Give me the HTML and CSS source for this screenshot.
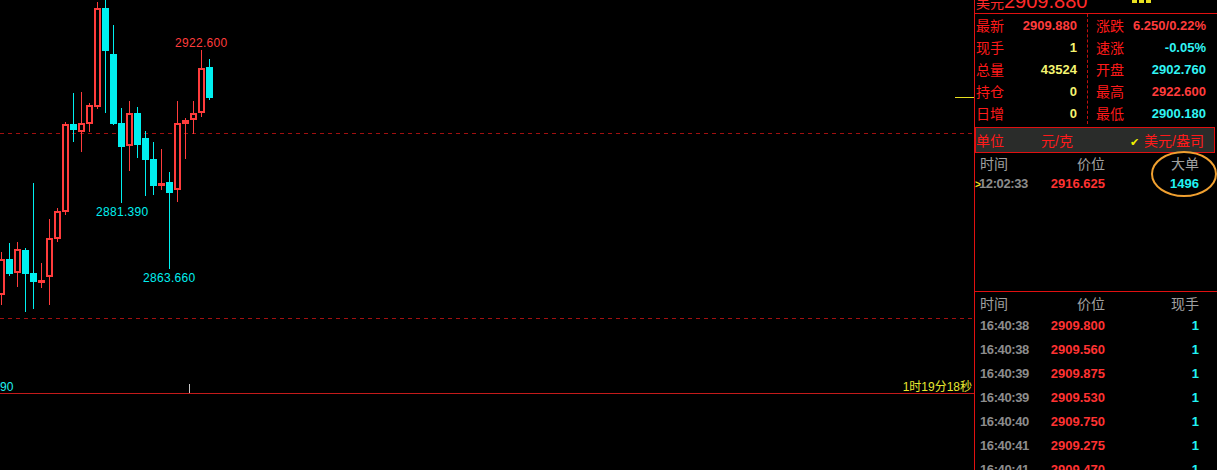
FILE: index.html
```html
<!DOCTYPE html>
<html lang="zh-CN">
<head>
<meta charset="utf-8">
<title>行情</title>
<link rel="stylesheet" href="styles.css">
</head>
<body>
<div class="screen">
  <div class="chart">
    <svg class="plot" width="974" height="377" viewBox="0 0 974 377">
      <line class="dash" x1="0" y1="133.5" x2="974" y2="133.5"/>
      <line class="dash" x1="0" y1="318.5" x2="974" y2="318.5"/>
      <line class="mark" x1="955" y1="97.5" x2="974" y2="97.5"/>

      <line class="wr" x1="1.5" y1="252" x2="1.5" y2="305"/><rect class="br" x="-1" y="260" width="5" height="34"/>
      <line class="wc" x1="9.5" y1="243" x2="9.5" y2="276"/><rect class="bc" x="6" y="259" width="7" height="15"/>
      <line class="wr" x1="17.5" y1="242" x2="17.5" y2="287"/><rect class="br" x="15" y="250" width="5" height="22"/>
      <line class="wc" x1="25.5" y1="248" x2="25.5" y2="312"/><rect class="bc" x="22" y="250" width="7" height="24"/>
      <line class="wc" x1="33.5" y1="183" x2="33.5" y2="309"/><rect class="bc" x="30" y="273" width="7" height="9"/>
      <line class="wr" x1="41.5" y1="263" x2="41.5" y2="288"/><rect class="br" x="39" y="281" width="5" height="1"/>
      <line class="wr" x1="49.5" y1="219" x2="49.5" y2="305"/><rect class="br" x="47" y="239" width="5" height="37"/>
      <line class="wr" x1="57.5" y1="208" x2="57.5" y2="242"/><rect class="br" x="55" y="212" width="5" height="26"/>
      <line class="wr" x1="65.5" y1="122" x2="65.5" y2="215"/><rect class="br" x="63" y="125" width="5" height="86"/>
      <line class="wc" x1="73.5" y1="93" x2="73.5" y2="142"/><rect class="bc" x="70" y="124" width="7" height="6"/>
      <line class="wr" x1="81.5" y1="92" x2="81.5" y2="152"/><rect class="br" x="79" y="124" width="5" height="7"/>
      <line class="wr" x1="89.5" y1="103" x2="89.5" y2="132"/><rect class="br" x="87" y="106" width="5" height="17"/>
      <line class="wr" x1="97.5" y1="2" x2="97.5" y2="109"/><rect class="br" x="95" y="9" width="5" height="97"/>
      <line class="wc" x1="105.5" y1="0" x2="105.5" y2="113"/><rect class="bc" x="102" y="8" width="7" height="43"/>
      <line class="wc" x1="113.5" y1="25" x2="113.5" y2="125"/><rect class="bc" x="110" y="54" width="7" height="70"/>
      <line class="wc" x1="121.5" y1="108" x2="121.5" y2="203"/><rect class="bc" x="118" y="123" width="7" height="24"/>
      <line class="wr" x1="129.5" y1="101" x2="129.5" y2="171"/><rect class="br" x="127" y="114" width="5" height="31"/>
      <line class="wc" x1="137.5" y1="107" x2="137.5" y2="158"/><rect class="bc" x="134" y="113" width="7" height="32"/>
      <line class="wc" x1="145.5" y1="131" x2="145.5" y2="196"/><rect class="bc" x="142" y="138" width="7" height="22"/>
      <line class="wc" x1="153.5" y1="142" x2="153.5" y2="195"/><rect class="bc" x="150" y="159" width="7" height="27"/>
      <line class="wr" x1="161.5" y1="149" x2="161.5" y2="190"/><rect class="br" x="159" y="184" width="5" height="1"/>
      <line class="wc" x1="169.5" y1="172" x2="169.5" y2="269"/><rect class="bc" x="166" y="182" width="7" height="11"/>
      <line class="wr" x1="177.5" y1="101" x2="177.5" y2="202"/><rect class="br" x="175" y="124" width="5" height="65"/>
      <line class="wr" x1="185.5" y1="118" x2="185.5" y2="159"/><rect class="br" x="183" y="121" width="5" height="2"/>
      <line class="wr" x1="193.5" y1="101" x2="193.5" y2="134"/><rect class="br" x="191" y="114" width="5" height="5"/>
      <line class="wr" x1="201.5" y1="50" x2="201.5" y2="117"/><rect class="br" x="199" y="69" width="5" height="43"/>
      <line class="wc" x1="209.5" y1="59" x2="209.5" y2="100"/><rect class="bc" x="206" y="67" width="7" height="31"/>

      <text class="lbl up" x="175" y="47">2922.600</text>
      <text class="lbl dn" x="96" y="216">2881.390</text>
      <text class="lbl dn" x="143" y="282">2863.660</text>
    </svg>
    <div class="axis">
      <span class="axis-start">90</span>
      <span class="tick"></span>
      <span class="axis-time">1时19分18秒</span>
    </div>
  </div>

  <aside class="panel">
    <div class="top">
      <div class="quote"><span class="cn">美元</span><span class="big-price">2909.880</span></div>
      <div class="ybits"></div>
    </div>

    <div class="stats">
      <div class="col col1">
        <div class="row"><span class="lab">最新</span><span class="val red">2909.880</span></div>
        <div class="row"><span class="lab">现手</span><span class="val yel">1</span></div>
        <div class="row"><span class="lab">总量</span><span class="val yel">43524</span></div>
        <div class="row"><span class="lab">持仓</span><span class="val yel">0</span></div>
        <div class="row"><span class="lab">日增</span><span class="val yel">0</span></div>
      </div>
      <div class="col col2">
        <div class="row"><span class="lab">涨跌</span><span class="val red">6.250/0.22%</span></div>
        <div class="row"><span class="lab">速涨</span><span class="val cyan">-0.05%</span></div>
        <div class="row"><span class="lab">开盘</span><span class="val cyan">2902.760</span></div>
        <div class="row"><span class="lab">最高</span><span class="val red">2922.600</span></div>
        <div class="row"><span class="lab">最低</span><span class="val cyan">2900.180</span></div>
      </div>
    </div>

    <div class="unit">
      <span class="unit-l">单位</span>
      <span>元/克</span>
      <span class="unit-alt"><span class="check">✔</span>美元/盎司</span>
    </div>

    <div class="bigorder">
      <div class="thead big-head"><span>时间</span><span class="r">价位</span><span class="r">大单</span></div>
      <div class="trow big-row"><span class="t"><span class="cursor">&gt;</span>12:02:33</span><span class="p r">2916.625</span><span class="q r">1496</span></div>
      <svg class="circle" width="70" height="50" viewBox="0 0 70 50"><ellipse cx="34" cy="24" rx="32" ry="22"/></svg>
    </div>

    <div class="trades">
      <div class="thead trade-head"><span>时间</span><span class="r">价位</span><span class="r">现手</span></div>
      <div class="trow"><span class="t">16:40:38</span><span class="p r">2909.800</span><span class="q r">1</span></div>
      <div class="trow"><span class="t">16:40:38</span><span class="p r">2909.560</span><span class="q r">1</span></div>
      <div class="trow"><span class="t">16:40:39</span><span class="p r">2909.875</span><span class="q r">1</span></div>
      <div class="trow"><span class="t">16:40:39</span><span class="p r">2909.530</span><span class="q r">1</span></div>
      <div class="trow"><span class="t">16:40:40</span><span class="p r">2909.750</span><span class="q r">1</span></div>
      <div class="trow"><span class="t">16:40:41</span><span class="p r">2909.275</span><span class="q r">1</span></div>
      <div class="trow"><span class="t">16:40:41</span><span class="p r">2909.470</span><span class="q r">1</span></div>
    </div>
  </aside>
</div>
</body>
</html>
```

FILE: styles.css
```css
* { box-sizing: border-box; }
html, body { margin: 0; background: #000; }
body {
  width: 1217px;
  height: 470px;
  overflow: hidden;
  font-family: "Liberation Sans", "Noto Sans CJK SC", sans-serif;
}
.screen { display: flex; height: 470px; }

/* chart */
.chart { width: 974px; flex: none; display: flex; flex-direction: column; }
.plot { display: block; }
.dash { stroke: #a01010; stroke-width: 1; stroke-dasharray: 4 4; }
.mark { stroke: #e8e020; stroke-width: 1; }
.wr { stroke: #ff3c3c; stroke-width: 1; }
.wc { stroke: #00f0f0; stroke-width: 1; }
.br { fill: #000; stroke: #ff3c3c; stroke-width: 2; }
.bc { fill: #00f0f0; }
.lbl { font-family: "Liberation Sans", sans-serif; font-size: 12px; letter-spacing: 0.3px; }
.lbl.up { fill: #ff3c3c; }
.lbl.dn { fill: #00f0f0; }

.axis {
  height: 17px;
  border-bottom: 1px solid #c41a1a;
  display: flex;
  align-items: flex-end;
  font-size: 12px;
  line-height: 16px;
}
.axis-start { width: 189px; color: #20f0f0; align-self: stretch; padding-top: 2px; }
.tick { width: 1px; height: 9px; background: #c8c8c8; }
.axis-time { margin-left: auto; color: #e8e830; padding-right: 2px; align-self: stretch; padding-top: 2px; }

/* right panel */
.panel {
  width: 243px;
  flex: none;
  border-left: 1px solid #e01010;
  display: flex;
  flex-direction: column;
}
.top {
  height: 14px;
  flex: none;
  border-bottom: 1px solid #e01010;
  overflow: hidden;
  display: flex;
  align-items: flex-start;
}
.quote { margin-top: -9px; line-height: 20px; color: #ff2a2a; white-space: nowrap; padding-left: 1px; }
.quote .cn { font-size: 14px; }
.quote .big-price { font-size: 20px; }
.ybits {
  margin-left: auto;
  margin-right: 65px;
  width: 20px;
  height: 3px;
  background: repeating-linear-gradient(90deg, #e8e020 0 5px, transparent 5px 7px);
}

.stats { display: grid; grid-template-columns: 112px 1fr; height: 110px; flex: none; }
.col { display: flex; flex-direction: column; }
.col2 { border-left: 1px dashed #c01010; }
.row { height: 22px; display: flex; align-items: center; justify-content: space-between; }
.col1 .row { padding: 0 10px 0 1px; }
.col2 .row { padding: 0 11px 0 8px; }
.lab { font-size: 14px; color: #ff1a1a; }
.val { font-size: 13px; font-weight: bold; }
.red { color: #ff3c3c; }
.yel { color: #f4f470; }
.cyan { color: #30f4f4; }

.unit {
  margin: 3px 2px 0 0;
  height: 26px;
  flex: none;
  border: 1px solid #e01010;
  background: #2a2c2a;
  display: flex;
  align-items: center;
  font-size: 14px;
  color: #ff1a1a;
  padding: 0 10px 0 0;
}
.unit-l { width: 65px; }
.unit-alt { margin-left: auto; }
.check { color: #f0f000; font-size: 11px; margin-right: 5px; font-family: "DejaVu Sans", sans-serif; }

.thead, .trow {
  display: grid;
  grid-template-columns: 60px 65px 1fr;
  padding: 0 18px 0 5px;
  align-items: center;
}
.thead { font-size: 14px; color: #a0a0a0; }
.r { text-align: right; }
.trow { font-size: 13px; font-weight: bold; height: 24px; }
.t { color: #8c8c8c; letter-spacing: -0.4px; white-space: nowrap; }
.p { color: #ff3232; }
.q { color: #20f4f4; }

.bigorder { height: 139px; flex: none; border-bottom: 1px solid #e01010; position: relative; }
.big-head { height: 20px; }
.big-row { height: 20px; }
.cursor { color: #f0e020; font-size: 10px; margin-left: -5px; display: inline-block; width: 4px; }
.circle { position: absolute; left: 175px; top: -3px; }
.circle ellipse { fill: none; stroke: #f0a030; stroke-width: 2; }

.trades { flex: 1; overflow: hidden; }
.trade-head { height: 21px; }
```
